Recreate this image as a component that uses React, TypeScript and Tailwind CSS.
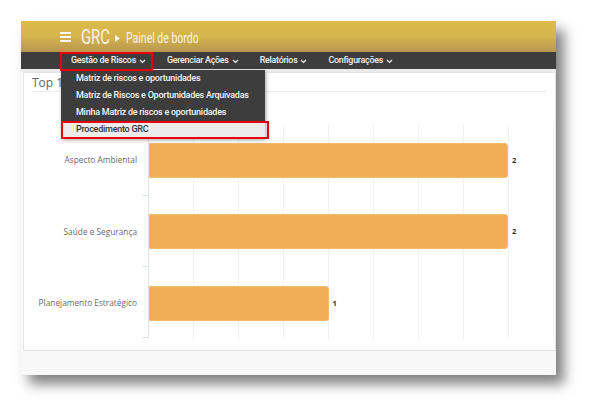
import React from "react";

const navItems = ["Gestão de Riscos", "Gerenciar Ações", "Relatórios", "Configurações"];

const menuItems = [
  "Matriz de riscos e oportunidades",
  "Matriz de Riscos e Oportunidades Arquivadas",
  "Minha Matriz de riscos e oportunidades",
  "Procedimento GRC",
];

const rows = [
  { label: "Aspecto Ambiental", value: 2 },
  { label: "Saúde e Segurança", value: 2 },
  { label: "Planejamento Estratégico", value: 1 },
];

const grid = [45, 90, 135, 180, 225, 270, 315, 360, 405];

function Chevron() {
  return (
    <svg width="7" height="5" viewBox="0 0 7 5" className="ml-[3px] mt-[1px]">
      <path d="M1 1l2.5 2.5L6 1" fill="none" stroke="currentColor" strokeWidth="1.2" />
    </svg>
  );
}

export default function App() {
  return (
    <div className="w-[598px] h-[417px] bg-white pt-[21px] pl-[21px] overflow-hidden">
      <div className="relative w-[535px] h-[354px] bg-[#f8f8f8] shadow-[8px_9px_12px_rgba(0,0,0,0.5)] flex flex-col">
        {/* header */}
        <div className="h-[31px] shrink-0 bg-gradient-to-b from-[#dcbb4b] via-[#d6b44c] to-[#b8964f] flex items-center pl-[39px] text-[#f7f3e4] [font-family:Roboto,sans-serif]">
          <div className="flex flex-col gap-[2px] w-[11px]">
            <span className="h-[2px] bg-white" />
            <span className="h-[2px] bg-white" />
            <span className="h-[2px] bg-white" />
          </div>
          <span className="ml-[10px] w-[29px] text-[20px] leading-none">
            <span className="inline-block origin-left scale-x-[0.74]">GRC</span>
          </span>
          <svg width="5" height="7" viewBox="0 0 5 7" className="ml-[5px] mt-[3px]">
            <path d="M0 0l5 3.5L0 7z" fill="#f7f3e4" />
          </svg>
          <span className="ml-[6px] mt-[3px] text-[14px] leading-none whitespace-nowrap">
            <span className="inline-block origin-left scale-x-[0.75]">Painel de bordo</span>
          </span>
        </div>

        {/* nav */}
        <div className="h-[17px] shrink-0 bg-[#3d3d3d] flex items-center pl-[50px] gap-[21px] text-[8.9px] tracking-[-0.25px] text-[#f2f2f2] [font-family:Roboto,sans-serif] font-medium">
          {navItems.map((n) => (
            <div key={n} className="flex items-center leading-none whitespace-nowrap">
              {n}
              <Chevron />
            </div>
          ))}
        </div>
        <div className="h-[3px] shrink-0 bg-[#ebebeb]" />

        {/* card */}
        <div className="h-[279px] shrink-0 ml-[2px] bg-white border border-[#e4e4e4] [font-family:'Open_Sans',sans-serif]">
          <div className="mx-[8px] h-[19px] border-b border-[#ececec] flex items-center text-[12px] text-[#666] leading-none pt-[1px]">
            Top 10 Processos
          </div>
          <div className="flex mt-[33px]">
            <div className="w-[124px] flex flex-col">
              {rows.map((r) => (
                <div key={r.label} className="h-[71.3px] flex items-center justify-end pr-[11px] text-[8.3px] text-[#6b6b6b]">
                  {r.label}
                </div>
              ))}
            </div>
            <div className="relative w-[406px] h-[214px] border-l border-[#dfe4ee]">
              {grid.map((g) => (
                <div key={g} className="absolute top-0 bottom-0 w-px bg-[#f2f2f2]" style={{ left: g - 1 }} />
              ))}
              {[71, 142, 213].map((t) => (
                <div key={t} className="absolute left-[-7px] w-[6px] h-px bg-[#dfe4ee]" style={{ top: t - 1 }} />
              ))}
              <div className="relative flex flex-col">
                {rows.map((r) => (
                  <div key={r.label} className="h-[71.3px] flex items-center">
                    <div
                      className="h-[35px] bg-[#f0ad55] border border-[#f5bb6c] rounded-r-[3px]"
                      style={{ width: r.value * 179.5 }}
                    />
                    <span className="ml-[4px] text-[7.5px] font-bold text-[#333]">{r.value}</span>
                  </div>
                ))}
              </div>
            </div>
          </div>
        </div>

        {/* dropdown */}
        <div className="absolute left-[40px] top-[49px] w-[204px] bg-[#3d3d3d] shadow-[1px_2px_4px_rgba(0,0,0,0.35)] text-[9px] tracking-[-0.25px] font-medium [font-family:Roboto,sans-serif]">
          {menuItems.map((m, i) => (
            <div
              key={m}
              className={`h-[17px] flex items-center pl-[15px] whitespace-nowrap ${
                i === 3 ? "bg-[#ececec] text-[#333]" : "text-[#f4f4f4]"
              }`}
            >
              {m}
            </div>
          ))}
        </div>

        {/* highlights */}
        <div className="absolute left-[39px] top-[31px] w-[93px] h-[19px] border-2 border-[#e8000b]" />
        <div className="absolute left-[40px] top-[100px] w-[208px] h-[18px] border-2 border-[#e8000b]" />
      </div>
    </div>
  );
}
